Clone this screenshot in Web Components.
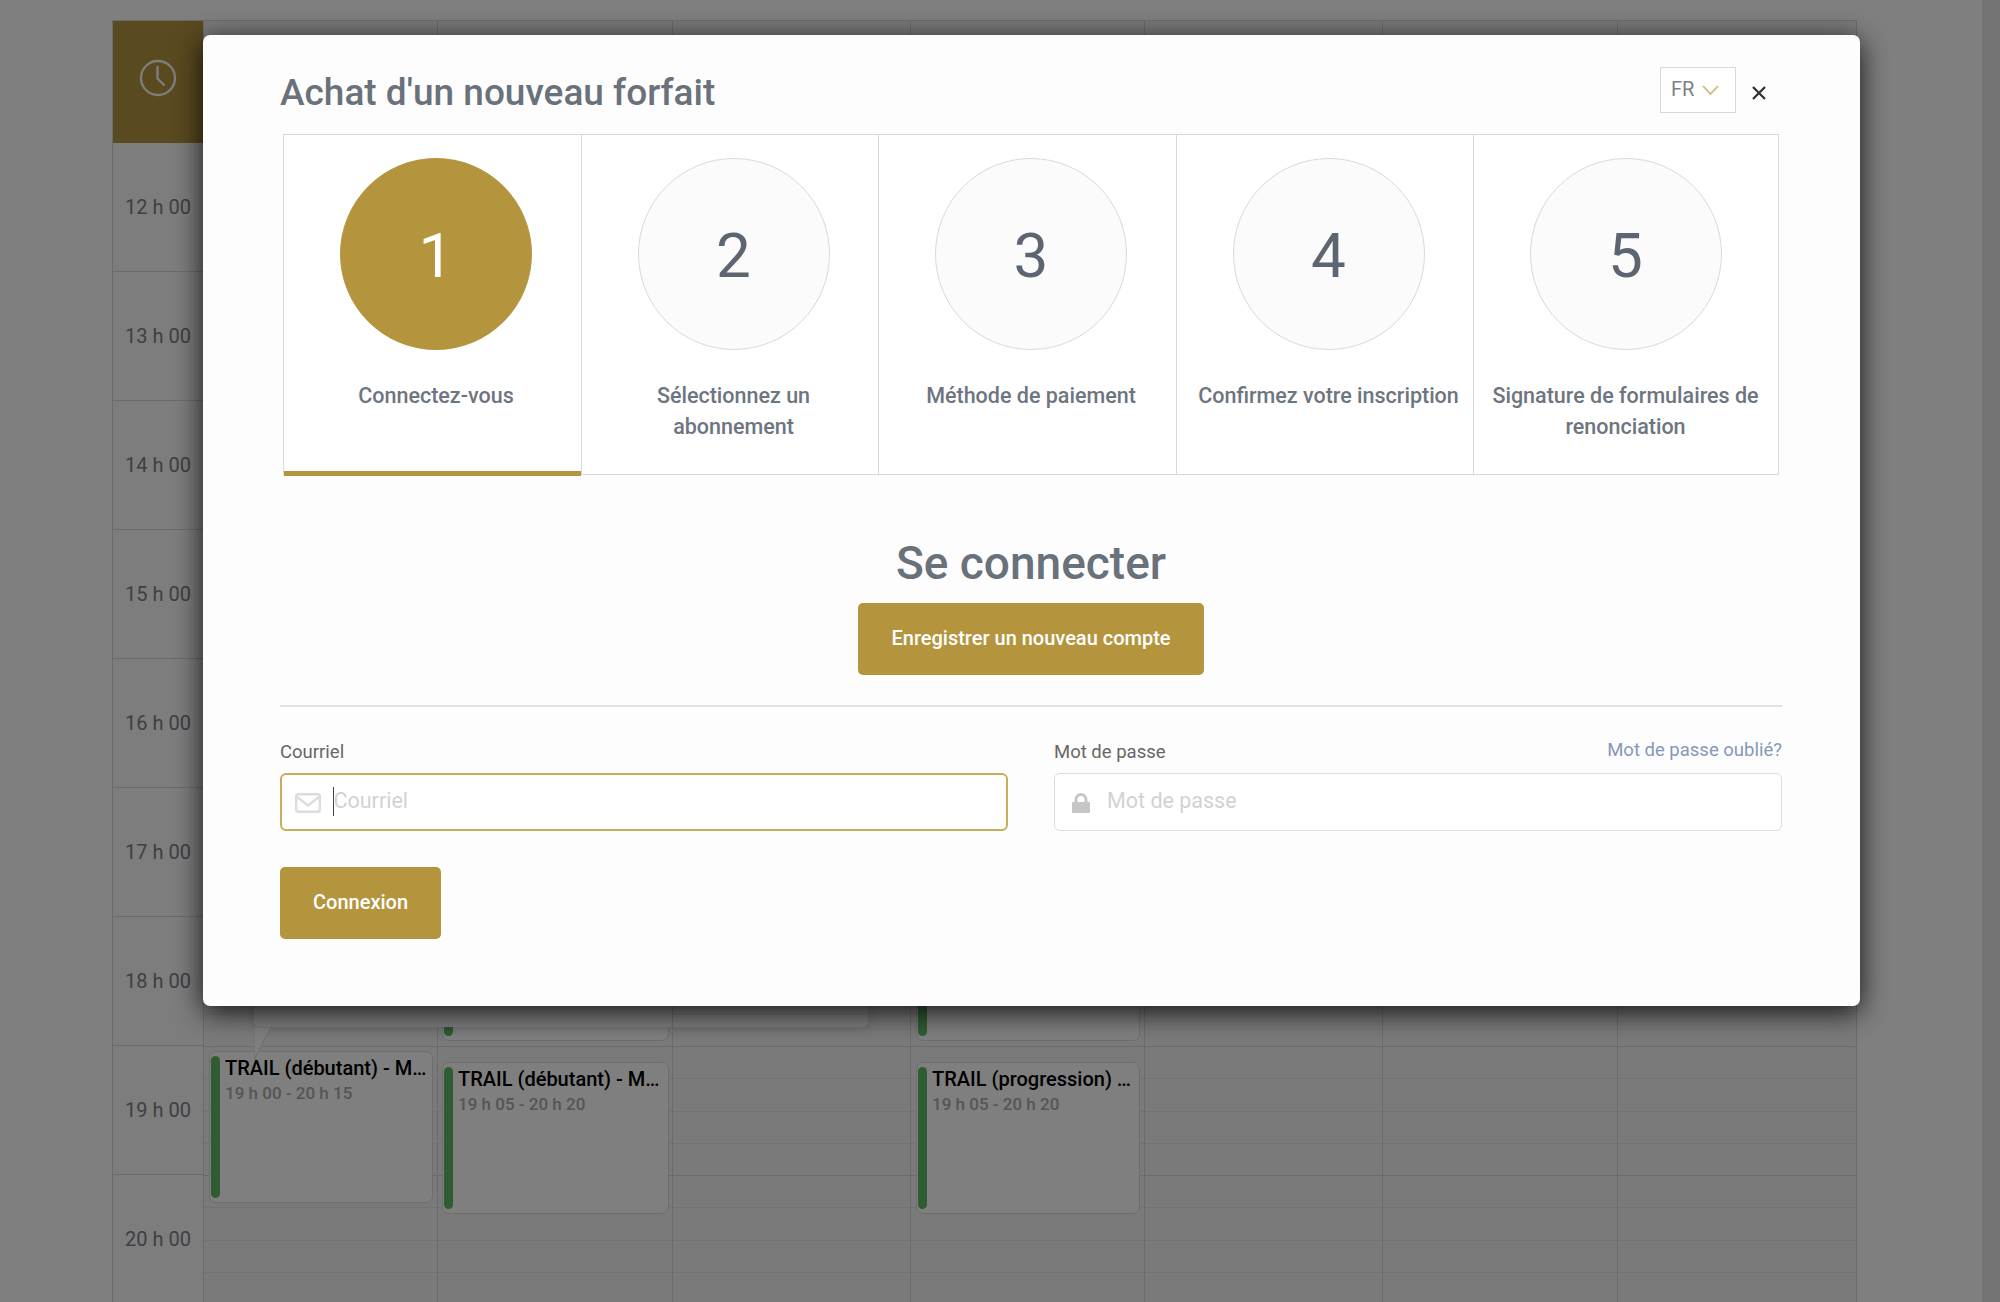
<!DOCTYPE html>
<html lang="fr">
<head>
<meta charset="utf-8">
<title>Achat d'un nouveau forfait</title>
<style>
  html, body { margin: 0; height: 100%; overflow: hidden; background: #fff; }
  body { font-family: Roboto, "Liberation Sans", sans-serif; }
</style>
</head>
<body>
<booking-page>
  <week-calendar slot="back"></week-calendar>
  <purchase-modal slot="front" heading="Achat d'un nouveau forfait"></purchase-modal>
</booking-page>

<script>
const GOLD = "#b4953e";

class BookingPage extends HTMLElement {
  constructor() {
    super();
    this.attachShadow({ mode: "open" });
    this.shadowRoot.innerHTML = `
      <style>
        :host { display: block; position: relative; width: 2000px; height: 1302px; overflow: hidden; }
        .back { display: flex; height: 100%; box-sizing: border-box; padding: 20px 0 0 112px; }
        .bar { position: absolute; top: 0; right: 0; bottom: 0; width: 18px; background: #e6e6e6; }
        .overlay { position: absolute; inset: 0; background: rgba(0,0,0,.5); box-sizing: border-box; padding: 35px 0 0 203px; }
      </style>
      <div class="back"><slot name="back"></slot></div>
      <div class="bar"></div>
      <div class="overlay"><slot name="front"></slot></div>
    `;
  }
}

class TimeRow extends HTMLElement {
  constructor() {
    super();
    this.attachShadow({ mode: "open" });
    this.shadowRoot.innerHTML = `
      <style>
        :host { display: flex; align-items: center; justify-content: center; height: 129px; box-sizing: border-box;
          border-bottom: 1px solid #d6d6d6; font-size: 20px; color: #7a8088; }
      </style>
      <slot></slot>
    `;
  }
}

class DayEvent extends HTMLElement {
  constructor() {
    super();
    this.attachShadow({ mode: "open" });
    this.shadowRoot.innerHTML = `
      <style>
        :host { position: absolute; display: block; box-sizing: border-box; background: #fff; border: 1px solid #dcdcdc;
          border-radius: 7px; padding: 4px 4px 4px 1px; }
        .in { display: flex; gap: 5px; height: 100%; }
        .mark { flex: none; width: 9px; border-radius: 5px; background: #5fb866; }
        .txt { min-width: 0; flex: 1; }
        .t { font-size: 20px; font-weight: 500; line-height: 24px; color: #000; white-space: nowrap; overflow: hidden; }
        .h { font-size: 17px; font-weight: 500; line-height: 26px; color: #aaa; white-space: nowrap; }
      </style>
      <div class="in">
        <div class="mark"></div>
        <div class="txt">
          <div class="t"><slot name="title"></slot></div>
          <div class="h"><slot name="hours"></slot></div>
        </div>
      </div>
    `;
  }
}

class WeekCalendar extends HTMLElement {
  constructor() {
    super();
    this.attachShadow({ mode: "open" });
    const hours = [12, 13, 14, 15, 16, 17, 18, 19, 20];
    const widths = [234, 235, 238, 234, 238, 235, 240];
    this.shadowRoot.innerHTML = `
      <style>
        :host { display: block; width: 1745px; height: 1300px; }
        .wrap { display: flex; border-top: 1px solid #d6d6d6; border-right: 1px solid #d6d6d6; height: 100%; background: #f5f5f5; }
        .times { flex: none; width: 91px; border-left: 1px solid #d6d6d6; box-sizing: border-box; background: #fafafa; }
        .head { height: 122px; background: ${GOLD}; display: flex; align-items: center; justify-content: center; box-sizing: border-box; padding: 0 0 9px 0; }
        .day { position: relative; flex: none; box-sizing: border-box; border-left: 1px solid #d6d6d6; }
        .top { height: 122px; }
        .slot { height: 32.25px; box-sizing: border-box; border-top: 1px solid #e6e6e6; }
        .slot.hr { border-top-color: #d6d6d6; }
        .tip { position: absolute; left: -184px; width: 614px; top: 706px; height: 300px; background: #fff; border-radius: 6px; box-shadow: 0 1px 12px rgba(0,0,0,.16); }
        .tip svg { position: absolute; left: 0; top: 100%; display: block; }
      </style>
      <div class="wrap">
        <div class="times">
          <div class="head">
            <svg width="38" height="38" viewBox="0 0 38 38" fill="none" stroke="#fff" stroke-opacity=".95" stroke-width="2.4" stroke-linecap="round">
              <circle cx="19" cy="19" r="17"/><path d="M18.5 8V19.5L25 26"/>
            </svg>
          </div>
          ${hours.map(h => `<time-row>${h} h 00</time-row>`).join("")}
        </div>
        ${widths.map((w, i) => `<div class="day" style="width:${w}px" id="d${i}"><div class="top"></div>${
          Array.from({ length: 40 }, (_, k) => `<div class="slot${k % 4 === 0 ? " hr" : ""}"></div>`).join("")}</div>`).join("")}
      </div>
    `;
    const d0 = this.shadowRoot.getElementById("d0");
    const d1 = this.shadowRoot.getElementById("d1");
    const d3 = this.shadowRoot.getElementById("d3");
    const ev = (day, x, y, w, h, title, time) => {
      const e = document.createElement("day-event");
      e.style.cssText = `left:${x}px;top:${y}px;width:${w}px;height:${h}px`;
      e.innerHTML = `<span slot="title">${title}</span><span slot="hours">${time}</span>`;
      day.appendChild(e);
    };
    ev(d0, 5, 1030, 224, 152, "TRAIL (débutant) - M…", "19 h 00 - 20 h 15");
    ev(d1, 4, 1041, 227, 152, "TRAIL (débutant) - M…", "19 h 05 - 20 h 20");
    ev(d3, 5, 1041, 224, 152, "TRAIL (progression) …", "19 h 05 - 20 h 20");
    ev(d1, 4, 868, 227, 152, "", "");
    ev(d3, 5, 868, 224, 152, "", "");
    const tip = document.createElement("div");
    tip.className = "tip";
    tip.innerHTML = `<svg width="18" height="34" viewBox="0 0 18 34"><path d="M0 0V33L17 0Z" fill="#fff" stroke="#dcdcdc"/></svg>`;
    d1.appendChild(tip);
  }
}

class LangSelect extends HTMLElement {
  constructor() {
    super();
    this.attachShadow({ mode: "open" });
    this.shadowRoot.innerHTML = `
      <style>
        :host { display: flex; align-items: center; box-sizing: border-box; width: 76px; height: 46px; border: 1.5px solid #d9d9d9;
          background: #fff; padding: 0 0 2px 10px; gap: 8px; font-size: 20px; color: #7b8088; }
        svg { display: block; margin-top: 2px; }
      </style>
      <slot></slot>
      <svg width="17" height="12" viewBox="0 0 17 12" fill="none" stroke="#cfb877" stroke-width="1.8"><path d="M1 2L8.5 10L16 2"/></svg>
    `;
  }
}

class StepTab extends HTMLElement {
  static get observedAttributes() { return ["number"]; }
  constructor() {
    super();
    this.attachShadow({ mode: "open" });
    this.shadowRoot.innerHTML = `
      <style>
        :host { display: block; position: relative; box-sizing: border-box; padding: 23px 7px 0 14px; text-align: center;
          border-left: 1.5px solid #d9d9d9; background: #fff; }
        :host(:first-child) { border-left: 0; }
        :host(:last-child) { padding: 23px 14px 0; }
        .circle { width: 192px; height: 192px; box-sizing: border-box; border-radius: 50%; border: 1.5px solid #d9d9d9; background: #fbfbfb;
          margin: 0 auto 30px; padding-top: 2px; display: flex; align-items: center; justify-content: center; font-size: 62px; color: #5d6670; }
        :host([active]) .circle { background: ${GOLD}; border-color: ${GOLD}; color: #fff; }
        :host([active])::after { content: ""; position: absolute; left: 0; right: 0; bottom: -1.5px; height: 5px; background: ${GOLD}; }
        .label { font-size: 21.5px; font-weight: 500; line-height: 31px; color: #6d7580; }
      </style>
      <div class="circle"></div>
      <div class="label"><slot></slot></div>
    `;
  }
  attributeChangedCallback(name, old, value) {
    this.shadowRoot.querySelector(".circle").textContent = value;
  }
}

class GoldButton extends HTMLElement {
  constructor() {
    super();
    this.attachShadow({ mode: "open" });
    this.shadowRoot.innerHTML = `
      <style>
        :host { display: inline-flex; align-items: center; justify-content: center; box-sizing: border-box; height: 72px;
          padding: 0 33px 2px; background: ${GOLD}; color: #fff; border-radius: 5px; font-size: 20px; font-weight: 500; }
      </style>
      <slot></slot>
    `;
  }
}

class FormField extends HTMLElement {
  constructor() {
    super();
    this.attachShadow({ mode: "open" });
    this.shadowRoot.innerHTML = `
      <style>
        :host { display: block; min-width: 0; }
        .top { display: flex; justify-content: space-between; align-items: flex-end; height: 38px; padding-bottom: 10px; box-sizing: content-box; }
        label { font-size: 18.5px; line-height: 22px; color: #666; }
        .box { display: flex; align-items: center; box-sizing: border-box; height: 58px; border: 1.5px solid #dcdcdc; border-radius: 6px; background: #fff; }
        :host([focused]) .box { border: 2px solid #c9ad5e; }
        .ico { flex: none; width: 52px; display: flex; justify-content: center; color: #dcdcdc; padding-top: 2px; }
        :host([focused]) .ico { width: 51.5px; }
        .ph { position: relative; font-size: 21.5px; color: #d2d2d2; padding-bottom: 4px; }
        :host([focused]) .ph::before { content: ""; position: absolute; left: -1px; top: -1px; bottom: 1px; width: 1.5px; background: #3b4252; }
      </style>
      <div class="top"><label></label><slot name="extra"></slot></div>
      <div class="box"><div class="ico"><slot name="icon"></slot></div><div class="ph"></div></div>
    `;
  }
  connectedCallback() {
    this.shadowRoot.querySelector("label").textContent = this.getAttribute("label");
    this.shadowRoot.querySelector(".ph").textContent = this.getAttribute("label");
  }
}

class PurchaseModal extends HTMLElement {
  constructor() {
    super();
    this.attachShadow({ mode: "open" });
    this.shadowRoot.innerHTML = `
      <style>
        :host { display: block; box-sizing: border-box; width: 1657px; height: 971px; padding: 0 78px 0 77px; background: #fdfdfd;
          border-radius: 7px; box-shadow: 0 6px 28px rgba(0,0,0,.85); color: #6d7580; }
        header { display: flex; align-items: center; height: 99px; box-sizing: border-box; padding: 10px 0 0; }
        h1 { flex: 1; margin: 6px 0 0; font-size: 37px; font-weight: 500; color: #69717b; }
        .close { width: 46px; }
        .close svg { display: block; margin: 6px 0 0 16px; }
        .steps { display: grid; grid-template-columns: 297px 297px 298px 297px 304px; margin: 0 3px; height: 341px; box-sizing: border-box; border: 1.5px solid #d9d9d9; background: #fff; }
        .center { text-align: center; }
        h2 { margin: 56px 0 0; font-size: 46px; line-height: 64px; font-weight: 500; color: #69717b; }
        .reg { margin-top: 8px; height: 72px; }
        hr { border: 0; border-top: 2px solid #e2e2e2; margin: 30px 0 0; }
        .row { display: grid; grid-template-columns: 728px 728px; column-gap: 46px; margin-top: 18px; }
        a { font-size: 18.5px; color: #8498b8; text-decoration: none; line-height: 22px; margin-bottom: 2px; }
        .submit { margin-top: 36px; }
      </style>
      <header>
        <h1></h1>
        <lang-select>FR</lang-select>
        <div class="close"><svg width="14" height="14" viewBox="0 0 14 14" stroke="#2f2f2f" stroke-width="2.2"><path d="M1 1L13 13M13 1L1 13"/></svg></div>
      </header>
      <div class="steps">
        <step-tab number="1" active>Connectez-vous</step-tab>
        <step-tab number="2">Sélectionnez un abonnement</step-tab>
        <step-tab number="3">Méthode de paiement</step-tab>
        <step-tab number="4">Confirmez votre inscription</step-tab>
        <step-tab number="5">Signature de formulaires de renonciation</step-tab>
      </div>
      <div class="center">
        <h2>Se connecter</h2>
        <div class="reg"><gold-button>Enregistrer un nouveau compte</gold-button></div>
      </div>
      <hr>
      <div class="row">
        <form-field label="Courriel" focused>
          <svg slot="icon" width="26" height="20" viewBox="0 0 26 20" fill="none" stroke="currentColor" stroke-width="2.4"><rect x="1.2" y="1.2" width="23.6" height="17.6" rx="2"/><path d="M2 4L13 12.5L24 4"/></svg>
        </form-field>
        <form-field label="Mot de passe">
          <a slot="extra" href="#">Mot de passe oublié?</a>
          <svg slot="icon" width="18" height="20" viewBox="0 0 18 20" fill="#c6c6c6"><path d="M2.5 9V6.5a6.5 6.5 0 0 1 13 0V9h1.5a1 1 0 0 1 1 1v9a1 1 0 0 1-1 1H1a1 1 0 0 1-1-1v-9a1 1 0 0 1 1-1zM5.5 9h7V6.5a3.5 3.5 0 0 0-7 0z"/></svg>
        </form-field>
      </div>
      <div class="submit"><gold-button>Connexion</gold-button></div>
    `;
  }
  connectedCallback() {
    this.shadowRoot.querySelector("h1").textContent = this.getAttribute("heading");
  }
}

customElements.define("time-row", TimeRow);
customElements.define("day-event", DayEvent);
customElements.define("week-calendar", WeekCalendar);
customElements.define("lang-select", LangSelect);
customElements.define("step-tab", StepTab);
customElements.define("gold-button", GoldButton);
customElements.define("form-field", FormField);
customElements.define("purchase-modal", PurchaseModal);
customElements.define("booking-page", BookingPage);
</script>
</body>
</html>
